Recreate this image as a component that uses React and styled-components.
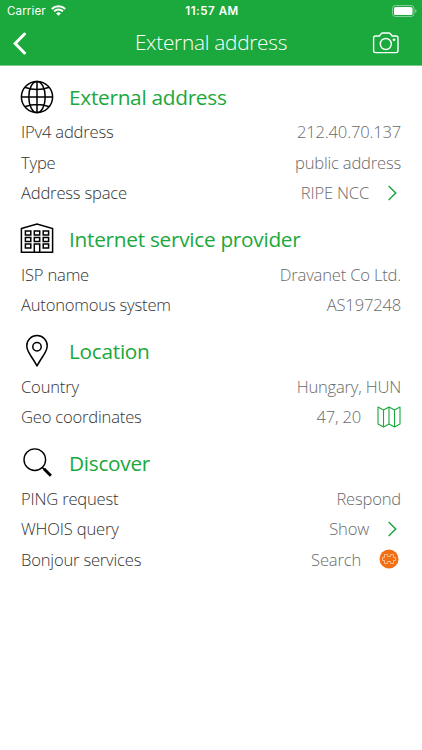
import styled, { createGlobalStyle } from "styled-components";

const GlobalStyle = createGlobalStyle`
  * {
    box-sizing: border-box;
  }

  body {
    margin: 0;
    background-color: white;
    font-family: "Open Sans", "Noto Sans", sans-serif;
  }
`;

const Screen = styled.div`
  width: 422px;
  height: 750px;
  overflow: hidden;
  background-color: white;
`;

const Header = styled.header`
  height: 66px;
  background-color: #1ba83c;
  border-bottom: 1px solid #7ccb8d;
  color: white;
`;

const StatusBar = styled.div`
  display: grid;
  grid-template-columns: 1fr auto 1fr;
  align-items: center;
  height: 21px;
  padding: 0 5px 0 7px;
  font-family: Inter, "Liberation Sans", sans-serif;
  font-size: 11.6px;
`;

const Carrier = styled.div`
  display: flex;
  align-items: center;
  gap: 5px;
  letter-spacing: 0.1px;
`;

const Time = styled.span`
  padding-top: 1px;
  font-weight: 600;
  letter-spacing: 0.5px;
`;

const BatterySlot = styled.div`
  display: flex;
  justify-content: flex-end;
`;

const NavBar = styled.div`
  display: grid;
  grid-template-columns: 40px 1fr 40px;
  align-items: center;
  height: 43px;
  padding: 0 22px 0 7px;
`;

const IconButton = styled.button`
  display: flex;
  justify-content: ${(props) => props.$align};
  padding: ${(props) => (props.$align === "flex-end" ? "0" : "1px 5px 0")};
  border: none;
  background: none;
  color: inherit;
`;

const Title = styled.h1`
  margin: 0;
  padding: 0 0 2px 15px;
  text-align: center;
  font-size: 20.8px;
  font-weight: 300;
  line-height: 28px;
  letter-spacing: -0.26px;
`;

const Content = styled.main`
  display: flex;
  flex-direction: column;
  gap: 11.5px;
  padding: 10.8px 21px 0;
`;

const SectionHeader = styled.div`
  display: grid;
  grid-template-columns: 32px 1fr;
  column-gap: 16px;
  align-items: center;
  height: 39.5px;
`;

const SectionTitle = styled.h2`
  margin: 0;
  color: #1ba83c;
  font-size: 20.8px;
  font-weight: 400;
  line-height: 28px;
  letter-spacing: -0.28px;
`;

const StyledRow = styled.div`
  display: flex;
  align-items: center;
  justify-content: space-between;
  height: 30.5px;
  font-size: 16.6px;
  font-weight: 300;
  letter-spacing: -0.2px;
`;

const Label = styled.span`
  color: #333;
`;

const Value = styled.span`
  display: flex;
  align-items: center;
  color: #6a6a6a;
`;

const Accessory = styled.span`
  display: flex;
  justify-content: flex-end;
  width: ${(props) => props.$width}px;
  padding-right: ${(props) => props.$inset || 0}px;
`;

const WifiIcon = () => (
  <svg width="15" height="11" viewBox="0 0 15 11" fill="none" stroke="white" strokeWidth="2">
    <path d="M0.8 4A9.6 9.6 0 0 1 14.2 4" />
    <path d="M3.1 6.4A6.3 6.3 0 0 1 11.9 6.4" />
    <path d="M7.5 10.8L5.1 8.4A3.4 3.4 0 0 1 9.9 8.4Z" fill="white" stroke="none" />
  </svg>
);

const BatteryIcon = () => (
  <svg width="25" height="12" viewBox="0 0 25 12" fill="none">
    <rect x="0.5" y="0.5" width="21.5" height="11" rx="3" stroke="white" strokeOpacity="0.45" />
    <rect x="2" y="2" width="18.5" height="8" rx="1.6" fill="white" />
    <path d="M23.2 4.2Q24.6 4.8 24.6 6T23.2 7.8Z" fill="white" fillOpacity="0.5" />
  </svg>
);

const BackIcon = () => (
  <svg width="16" height="24" viewBox="0 0 16 24" fill="none" stroke="white" strokeWidth="3">
    <path d="M12.5 3L3.2 12.5L12.5 22" strokeLinecap="round" strokeLinejoin="miter" />
  </svg>
);

const CameraIcon = () => (
  <svg width="28" height="22" viewBox="0 0 28 22" fill="none" stroke="white" strokeWidth="1.4">
    <path
      d="M3.6 4H7.4L9.5 1.4Q9.9 1 10.5 1H17.1Q17.7 1 18.1 1.4L20.1 4H24Q26 4 26 6V18.6Q26 20.6 24 20.6H3.6Q1.6 20.6 1.6 18.6V6Q1.6 4 3.6 4Z"
      strokeLinejoin="round"
    />
    <circle cx="13.8" cy="12" r="5.5" />
    <circle cx="22" cy="7.8" r="1.4" fill="white" stroke="none" />
  </svg>
);

const GlobeIcon = () => (
  <svg width="34" height="34" viewBox="0 0 34 34" fill="none" stroke="black" strokeWidth="1.5">
    <circle cx="17" cy="17" r="15.6" />
    <ellipse cx="17" cy="17" rx="8.2" ry="15.6" />
    <path d="M17 1.4V32.6M1.4 17H32.6M4.7 7.2Q17 11.8 29.3 7.2M4.7 26.8Q17 22.2 29.3 26.8" />
  </svg>
);

const BuildingIcon = () => (
  <svg width="34" height="32" viewBox="0 1 34 32" fill="none" stroke="black" strokeWidth="1.5">
    <path d="M1.4 6.5L17 2L32.6 6.5V30.2H1.4Z" />
    <path d="M5.4 9H10.8V13H5.4ZM14.3 9H19.7V13H14.3ZM23.2 9H28.6V13H23.2Z" />
    <path d="M5.4 15.5H10.8V19.5H5.4ZM14.3 15.5H19.7V19.5H14.3ZM23.2 15.5H28.6V19.5H23.2Z" />
    <path d="M5.4 22H10.8V26H5.4ZM23.2 22H28.6V26H23.2ZM14.3 30V22H19.7V30" />
  </svg>
);

const PinIcon = () => (
  <svg width="24" height="34" viewBox="0 0 24 34" fill="none" stroke="black" strokeWidth="1.5">
    <path
      d="M12 32C10.5 29 8 25.2 5.7 21.7C3.2 17.9 1.8 15 1.8 11.8A10.2 10.2 0 0 1 22.2 11.8C22.2 15 20.8 17.9 18.3 21.7C16 25.2 13.5 29 12 32Z"
      strokeLinejoin="round"
    />
    <circle cx="12" cy="12.8" r="4.2" />
  </svg>
);

const SearchIcon = () => (
  <svg width="32" height="32" viewBox="-0.5 0 32 32" fill="none" stroke="black">
    <circle cx="13.3" cy="12.7" r="10.8" strokeWidth="1.4" />
    <path d="M20.6 20.2L23.4 23" strokeWidth="1.6" />
    <path d="M22.4 21.8L29.4 28.8" strokeWidth="3" />
  </svg>
);

const ChevronIcon = () => (
  <svg width="10" height="16" viewBox="0.5 0 10 16" fill="none" stroke="#1ba83c" strokeWidth="1.5">
    <path d="M1.2 1L8.2 8L1.2 15" />
  </svg>
);

const MapIcon = () => (
  <svg width="24" height="22" viewBox="0 0 24 22" fill="none" stroke="#1ba83c" strokeWidth="1.1">
    <path
      d="M1 1L6.5 4L12 1L17.5 4L23 1V18L17.5 21L12 18L6.5 21L1 18ZM6.5 4V21M12 1V18M17.5 4V21"
      strokeLinejoin="round"
    />
  </svg>
);

const PluginIcon = () => (
  <svg width="20" height="20" viewBox="0 0 20 20" fill="none">
    <circle cx="10" cy="10" r="9.5" fill="#f26f13" />
    <path
      d="M5.5 5.5H8.5V7.5H11.5V5.5H14.5V8.5H16.5V11.5H14.5V14.5H11.5V12.5H8.5V14.5H5.5V11.5H3.5V8.5H5.5Z"
      stroke="#fbc59b"
      strokeWidth="0.9"
      strokeLinejoin="round"
    />
  </svg>
);

const IconCell = styled.div`
  display: flex;
  justify-content: center;

  svg {
    flex-shrink: 0;
  }
`;

const Section = ({ icon, title, children }) => {
  return (
    <section>
      <SectionHeader>
        <IconCell>{icon}</IconCell>
        <SectionTitle>{title}</SectionTitle>
      </SectionHeader>
      {children}
    </section>
  );
};

const Row = ({ label, value, children }) => {
  return (
    <StyledRow>
      <Label>{label}</Label>
      <Value>
        {value}
        {children}
      </Value>
    </StyledRow>
  );
};

const App = () => {
  return (
    <Screen>
      <GlobalStyle />
      <Header>
        <StatusBar>
          <Carrier>
            Carrier
            <WifiIcon />
          </Carrier>
          <Time>11:57 AM</Time>
          <BatterySlot>
            <BatteryIcon />
          </BatterySlot>
        </StatusBar>
        <NavBar>
          <IconButton $align="flex-start" aria-label="Back">
            <BackIcon />
          </IconButton>
          <Title>External address</Title>
          <IconButton $align="flex-end" aria-label="Take screenshot">
            <CameraIcon />
          </IconButton>
        </NavBar>
      </Header>
      <Content>
        <Section icon={<GlobeIcon />} title="External address">
          <Row label="IPv4 address" value="212.40.70.137" />
          <Row label="Type" value="public address" />
          <Row label="Address space" value="RIPE NCC">
            <Accessory $width={32} $inset={3}>
              <ChevronIcon />
            </Accessory>
          </Row>
        </Section>
        <Section icon={<BuildingIcon />} title="Internet service provider">
          <Row label="ISP name" value="Dravanet Co Ltd." />
          <Row label="Autonomous system" value="AS197248" />
        </Section>
        <Section icon={<PinIcon />} title="Location">
          <Row label="Country" value="Hungary, HUN" />
          <Row label="Geo coordinates" value="47, 20">
            <Accessory $width={40}>
              <MapIcon />
            </Accessory>
          </Row>
        </Section>
        <Section icon={<SearchIcon />} title="Discover">
          <Row label="PING request" value="Respond" />
          <Row label="WHOIS query" value="Show">
            <Accessory $width={32} $inset={3}>
              <ChevronIcon />
            </Accessory>
          </Row>
          <Row label="Bonjour services" value="Search">
            <Accessory $width={40} $inset={2}>
              <PluginIcon />
            </Accessory>
          </Row>
        </Section>
      </Content>
    </Screen>
  );
};

export default App;
